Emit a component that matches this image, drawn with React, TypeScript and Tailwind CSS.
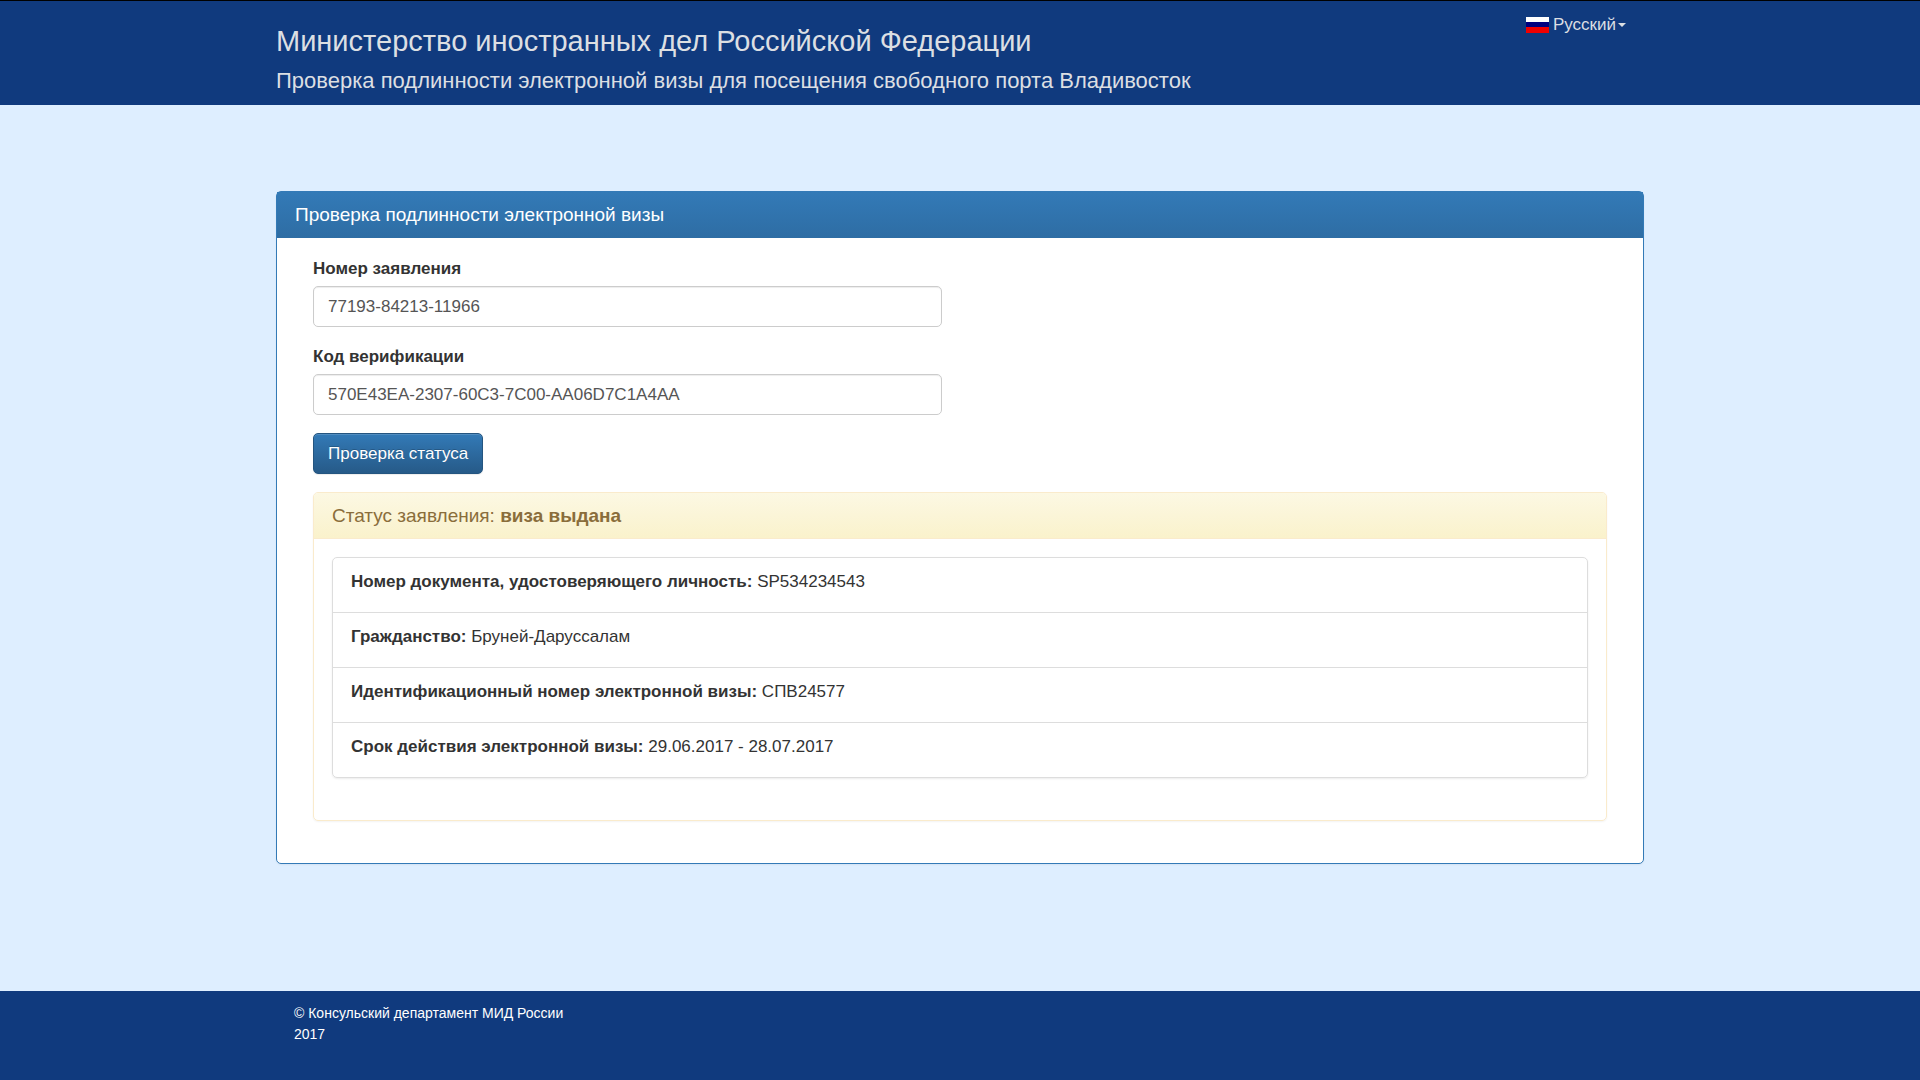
import { useState } from 'react';
import type { FormEvent } from 'react';

const details = [
  { label: 'Номер документа, удостоверяющего личность', value: 'SP534234543' },
  { label: 'Гражданство', value: 'Бруней-Даруссалам' },
  { label: 'Идентификационный номер электронной визы', value: 'СПВ24577' },
  { label: 'Срок действия электронной визы', value: '29.06.2017 - 28.07.2017' },
];

function RussianFlag() {
  return (
    <svg width="23" height="16" viewBox="0 0 23 16" aria-hidden="true">
      <rect width="23" height="16" fill="#fff" />
      <rect y="5" width="23" height="6" fill="#00007f" />
      <rect y="10" width="23" height="6" fill="#f00000" />
    </svg>
  );
}

function Header() {
  return (
    <header className="border-t border-black bg-[#103a7e] text-[#dcdfe3]">
      <div className="mx-auto flex w-full max-w-[1368px] items-start justify-between pt-6 pb-[10px]">
        <div className="flex flex-col gap-[10px]">
          <h1 className="text-[29px] leading-8">Министерство иностранных дел Российской Федерации</h1>
          <h2 className="text-[22px] leading-7">
            Проверка подлинности электронной визы для посещения свободного порта Владивосток
          </h2>
        </div>
        <button type="button" className="-mt-3 mr-[18px] flex cursor-pointer items-center gap-1 text-[17px] leading-6">
          <RussianFlag />
          <span className="flex items-center gap-[2px]">
            Русский
            <svg width="8" height="4" viewBox="0 0 8 4" fill="currentColor" aria-hidden="true">
              <path d="M0 0h8L4 4z" />
            </svg>
          </span>
        </button>
      </div>
    </header>
  );
}

function Field({ id, label, value, onChange }: {
  id: string;
  label: string;
  value: string;
  onChange: (value: string) => void;
}) {
  return (
    <div className="flex flex-col gap-[5px]">
      <label htmlFor={id} className="font-bold">{label}</label>
      <input
        id={id}
        type="text"
        value={value}
        onChange={(e) => onChange(e.target.value)}
        className="h-[41px] w-full rounded-[5px] border border-[#ccc] bg-white px-[14px] text-[#555] shadow-[inset_0_1px_1px_rgba(0,0,0,0.075)] outline-none focus:border-[#66afe9]"
      />
    </div>
  );
}

export default function App() {
  const [applicationNumber, setApplicationNumber] = useState('77193-84213-11966');
  const [code, setCode] = useState('570E43EA-2307-60C3-7C00-AA06D7C1A4AA');

  const handleSubmit = (e: FormEvent) => {
    e.preventDefault();
  };

  return (
    <div className="flex min-h-screen flex-col bg-[#deeeff] font-['Liberation_Sans',Arial,sans-serif] text-[17px] leading-6 text-[#333]">
      <Header />

      <main className="mx-auto w-full max-w-[1368px] grow py-[86px]">
        <section className="rounded-[5px] border border-[#337ab7] bg-white shadow-[0_1px_2px_rgba(0,0,0,0.05)]">
          <h3 className="bg-linear-to-b from-[#337ab7] to-[#2e6da4] px-[18px] py-[11px] text-[19px] text-white">
            Проверка подлинности электронной визы
          </h3>

          <div className="px-9 pt-[19px] pb-[42px]">
            <form onSubmit={handleSubmit} className="grid grid-cols-1 gap-9 md:grid-cols-2">
              <div className="flex flex-col items-stretch gap-[18px]">
                <Field
                  id="application-number"
                  label="Номер заявления"
                  value={applicationNumber}
                  onChange={setApplicationNumber}
                />
                <Field id="verification-code" label="Код верификации" value={code} onChange={setCode} />
                <button
                  type="submit"
                  className="h-[41px] cursor-pointer self-start rounded-[5px] border border-[#245580] bg-linear-to-b from-[#337ab7] to-[#265a88] px-[14px] text-white shadow-[inset_0_1px_0_rgba(255,255,255,0.15),0_1px_1px_rgba(0,0,0,0.075)] text-shadow-[0_-1px_0_rgba(0,0,0,0.2)]"
                >
                  Проверка статуса
                </button>
              </div>
            </form>

            <section className="mt-[18px] rounded-[5px] border border-[#faebcc] shadow-[0_1px_2px_rgba(0,0,0,0.05)]">
              <h4 className="rounded-t border-b border-[#faebcc] bg-linear-to-b from-[#fcf8e3] to-[#faf2cc] px-[18px] pt-[11px] pb-[10px] text-[19px] text-[#8a6d3b]">
                Статус заявления: <strong>виза выдана</strong>
              </h4>
              <div className="px-[18px] pt-[18px] pb-[42px]">
                <ul className="divide-y divide-[#ddd] rounded-[5px] border border-[#ddd] shadow-[0_1px_2px_rgba(0,0,0,0.075)]">
                  {details.map((item) => (
                    <li key={item.label} className="px-[18px] pt-3 pb-[18px]">
                      <strong>{item.label}:</strong> {item.value}
                    </li>
                  ))}
                </ul>
              </div>
            </section>
          </div>
        </section>
      </main>

      <footer className="bg-[#103a7e] text-[14px] leading-[21px] text-white">
        <div className="mx-auto w-full max-w-[1368px] px-[18px] pt-3 pb-[35px]">
          <p>© Консульский департамент МИД России</p>
          <p>2017</p>
        </div>
      </footer>
    </div>
  );
}
